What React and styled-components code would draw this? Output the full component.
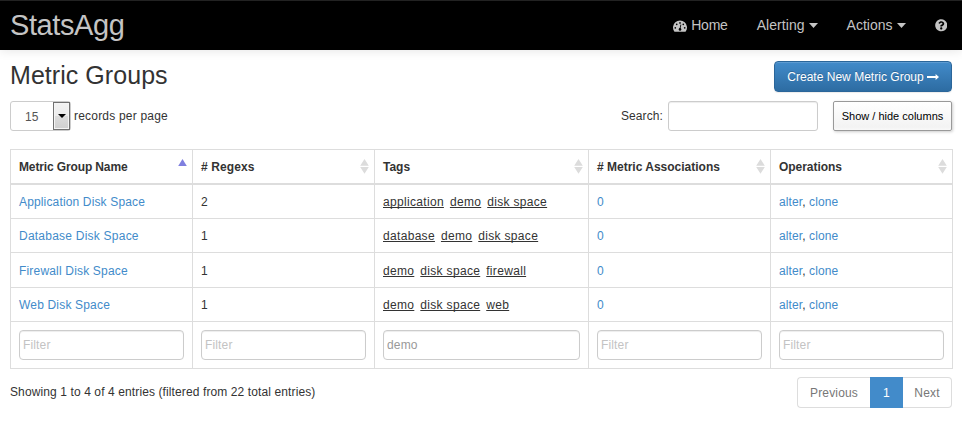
import React from "react";
import styled, { createGlobalStyle } from "styled-components";
import { FaQuestionCircle } from "react-icons/fa";

const GlobalStyle = createGlobalStyle`
  * { box-sizing: border-box; }
  body {
    margin: 0;
    background: #fff;
    color: #333;
    font: 12px/17px "Liberation Sans", Arial, sans-serif;
    letter-spacing: 0.15px;
  }
  input, button { font: inherit; letter-spacing: inherit; }
  a { color: #428bca; text-decoration: none; }
`;

const Spaced = styled.span`
  white-space: pre;
  letter-spacing: ${(p) => p.$ls}px;
`;

const Navbar = styled.header`
  display: flex;
  justify-content: space-between;
  height: 50px;
  padding: 0 15px 0 10px;
  border-top: 1px solid #222;
  background: #000;
  box-shadow: 0 1px 10px rgba(0, 0, 0, 0.1);
`;

const Brand = styled.div`
  color: #c4c4c4;
  font-size: 29px;
  line-height: 49px;
`;

const Nav = styled.nav`
  display: flex;
  align-items: center;
  font-size: 14px;
  color: #c4c4c4;
`;

const NavItem = styled.div`
  display: flex;
  align-items: center;
  gap: ${(p) => p.$gap || 3}px;
  margin-left: 29px;
  height: 49px;
  white-space: nowrap;
  svg { display: block; }
`;

const Content = styled.main`
  padding: 11px 10px 0;
`;

const TitleRow = styled.div`
  display: flex;
  justify-content: space-between;
  height: 31px;
`;

const Title = styled.h1`
  margin: 0;
  font-size: 25px;
  font-weight: 400;
  line-height: 29px;
  white-space: nowrap;
`;

const PrimaryButton = styled.button`
  display: flex;
  align-items: center;
  justify-content: center;
  gap: 3px;
  width: 178px;
  height: 31px;
  padding: 1px 0 0;
  border: 1px solid #2b669a;
  border-radius: 4px;
  background: linear-gradient(#428bca, #2d6ca2);
  box-shadow: inset 0 1px 0 rgba(255, 255, 255, 0.15), 0 1px 1px rgba(0, 0, 0, 0.075);
  color: #fff;
  text-shadow: 0 -1px 0 rgba(0, 0, 0, 0.2);
  white-space: nowrap;
`;

const Toolbar = styled.div`
  display: flex;
  align-items: center;
  height: 30px;
  margin-top: 9px;
`;

const LengthSelect = styled.div`
  display: flex;
  justify-content: space-between;
  align-items: center;
  width: 61px;
  height: 30px;
  margin-right: 3px;
  padding-left: 14px;
  border: 1px solid #ccc;
  border-radius: 3px;
  color: #555;
`;

const LengthValue = styled.span`
  padding-top: 2px;
`;

const SelectArrow = styled.span`
  display: flex;
  align-items: center;
  justify-content: center;
  width: 17px;
  height: 28px;
  border: 1px solid #707070;
  background: linear-gradient(#f2f2f2, #ebebeb 50%, #dcdcdc 51%, #cfcfcf);
  box-shadow: inset 0 0 0 1px #f4f4f4;
  color: #000;
`;

const SearchLabel = styled.label`
  display: flex;
  align-items: center;
  gap: 5px;
  margin-left: auto;
`;

const TextInput = styled.input`
  display: block;
  width: ${(p) => p.$w || "100%"};
  height: 30px;
  padding: 0 4px 1px 3px;
  border: 1px solid #ccc;
  border-radius: ${(p) => p.$radius || 4}px;
  outline: 0;
  background: #fff;
  box-shadow: inset 0 1px 1px rgba(0, 0, 0, 0.075);
  color: #999;
  &::placeholder { color: #c3c3c3; opacity: 1; }
`;

const ColumnsButton = styled.button`
  width: 119px;
  height: 30px;
  margin-left: 15px;
  padding: 0;
  border: 1px solid #999;
  border-radius: 2px;
  background: linear-gradient(#fff 0%, #f3f3f3 89%, #f9f9f9 100%);
  box-shadow: 1px 1px 3px #ccc;
  color: #000;
  font-size: 11px;
  white-space: nowrap;
`;

const Grid = styled.div`
  display: grid;
  grid-template-columns: 182px 182px 214px 182px 182px;
  grid-template-rows: 35px 34px 34px 35px 34px 47px;
  width: 943px;
  margin-top: 18px;
  border-top: 1px solid #ddd;
  border-left: 1px solid #ddd;
`;

const Cell = styled.div`
  display: flex;
  align-items: center;
  padding: 2px 8px 0;
  border-right: 1px solid #ddd;
  border-bottom: 1px solid #ddd;
  white-space: nowrap;
`;

const HeadCell = styled(Cell)`
  justify-content: space-between;
  padding-right: 4px;
  border-bottom-width: 2px;
  font-weight: 700;
  svg { margin-top: -2px; }
`;

const FilterCell = styled(Cell)`
  padding-top: 0;
`;

const Tags = styled.span`
  display: flex;
  gap: 6px;
  letter-spacing: 0.32px;
`;

const Tag = styled.span`
  text-decoration: underline;
  text-underline-offset: 1px;
  text-decoration-thickness: 1px;
  text-decoration-skip-ink: none;
`;

const Footer = styled.div`
  display: flex;
  justify-content: space-between;
  height: 31px;
  margin-top: 8px;
  line-height: 30px;
`;

const Pager = styled.div`
  display: flex;
  border-radius: 4px;
`;

const PageButton = styled.a`
  display: block;
  width: ${(p) => p.$w}px;
  height: 31px;
  border: 1px solid ${(p) => (p.$active ? "#428bca" : "#ddd")};
  border-width: ${(p) => (p.$side === "left" ? "1px 0 1px 1px" : p.$side === "right" ? "1px 1px 1px 0" : "1px")};
  border-radius: ${(p) => (p.$side === "left" ? "4px 0 0 4px" : p.$side === "right" ? "0 4px 4px 0" : "0")};
  background: ${(p) => (p.$active ? "#428bca" : "#fff")};
  color: ${(p) => (p.$active ? "#fff" : "#777")};
  text-align: center;
`;

const Gauge = () => (
  <svg width="14" height="14" viewBox="0 1 14 14">
    <path d="M1.3 13.5A7 7 0 1 1 12.7 13.5Q12.5 13.8 12 13.8H2Q1.5 13.8 1.3 13.5z" fill="currentColor" />
    <g fill="#000" transform="translate(0 1)">
      <circle cx="2.3" cy="8.8" r="0.85" />
      <circle cx="3.7" cy="5.3" r="0.85" />
      <circle cx="7" cy="3.9" r="0.85" />
      <circle cx="10.3" cy="5.3" r="0.85" />
      <circle cx="11.7" cy="8.8" r="0.85" />
      <circle cx="7" cy="10.4" r="1.3" />
      <path d="M6.5 9.7l1-4.2 .8 .2-1 4.2z" />
    </g>
  </svg>
);

const Caret = ({ w = 8, h = 5 }) => (
  <svg width={w} height={h} viewBox="0 0 8 5" preserveAspectRatio="none">
    <path d="M0 0h8L4 5z" fill="currentColor" />
  </svg>
);

const LongArrow = () => (
  <svg width="12" height="8" viewBox="0 0 12 8" fill="#fff">
    <path d="M0 3h8.6V1L12 4 8.6 7V5H0z" />
  </svg>
);

const SortIcon = ({ active }) => (
  <svg width="11" height="15" viewBox="0 0 11 15">
    {active ? (
      <path d="M1.2 7L5.5 0l4.3 7z" fill="#7f7fdf" />
    ) : (
      <path d="M1.2 6.8L5.5 0l4.3 6.8zM1.2 8h8.6l-4.3 6.8z" fill="#dcdcdc" />
    )}
  </svg>
);

const columns = [
  { label: "Metric Group Name", ls: -0.13, active: true },
  { label: "# Regexs", ls: 0.1 },
  { label: "Tags", ls: 0 },
  { label: "# Metric Associations", ls: 0 },
  { label: "Operations", ls: -0.05 },
];

const groups = [
  { name: "Application Disk Space", ls: 0.15, count: 2, tags: ["application", "demo", "disk space"] },
  { name: "Database Disk Space", ls: 0.23, count: 1, tags: ["database", "demo", "disk space"] },
  { name: "Firewall Disk Space", ls: 0.18, count: 1, tags: ["demo", "disk space", "firewall"] },
  { name: "Web Disk Space", ls: 0.18, count: 1, tags: ["demo", "disk space", "web"] },
];

export default function App() {
  return (
    <>
      <GlobalStyle />
      <Navbar>
        <Brand><Spaced $ls={-0.4}>StatsAgg</Spaced></Brand>
        <Nav>
          <NavItem $gap={4}><Gauge /><Spaced $ls={-0.2}>Home</Spaced></NavItem>
          <NavItem $gap={4}><Spaced $ls={0.05}>Alerting</Spaced><Caret w={9} /></NavItem>
          <NavItem $gap={4}><Spaced $ls={0}>Actions</Spaced><Caret w={9} /></NavItem>
          <NavItem><FaQuestionCircle size={12.5} /></NavItem>
        </Nav>
      </Navbar>
      <Content>
        <TitleRow>
          <Title><Spaced $ls={0.05}>Metric Groups</Spaced></Title>
          <PrimaryButton><Spaced $ls={0.02}>Create New Metric Group</Spaced><LongArrow /></PrimaryButton>
        </TitleRow>
        <Toolbar>
          <LengthSelect><LengthValue>15</LengthValue><SelectArrow><Caret w={8} h={4} /></SelectArrow></LengthSelect>
          <Spaced $ls={0.2}>records per page</Spaced>
          <SearchLabel><Spaced $ls={0.1}>Search:</Spaced><TextInput $w="150px" $radius={3} /></SearchLabel>
          <ColumnsButton><Spaced $ls={0}>Show / hide columns</Spaced></ColumnsButton>
        </Toolbar>
        <Grid>
          {columns.map((c) => (
            <HeadCell key={c.label}>
              <Spaced $ls={c.ls}>{c.label}</Spaced>
              <SortIcon active={c.active} />
            </HeadCell>
          ))}
          {groups.map((g) => (
            <React.Fragment key={g.name}>
              <Cell><Spaced as="a" $ls={g.ls}>{g.name}</Spaced></Cell>
              <Cell>{g.count}</Cell>
              <Cell><Tags>{g.tags.map((t) => <Tag key={t}>{t}</Tag>)}</Tags></Cell>
              <Cell><a>0</a></Cell>
              <Cell><Spaced $ls={0.1}><a>alter</a>, <a>clone</a></Spaced></Cell>
            </React.Fragment>
          ))}
          {columns.map((c) => (
            <FilterCell key={c.label}>
              <TextInput placeholder="Filter" defaultValue={c.label === "Tags" ? "demo" : ""} />
            </FilterCell>
          ))}
        </Grid>
        <Footer>
          <Spaced $ls={0.11}>Showing 1 to 4 of 4 entries (filtered from 22 total entries)</Spaced>
          <Pager>
            <PageButton $w={73} $side="left">Previous</PageButton>
            <PageButton $w={33} $active>1</PageButton>
            <PageButton $w={49} $side="right">Next</PageButton>
          </Pager>
        </Footer>
      </Content>
    </>
  );
}
